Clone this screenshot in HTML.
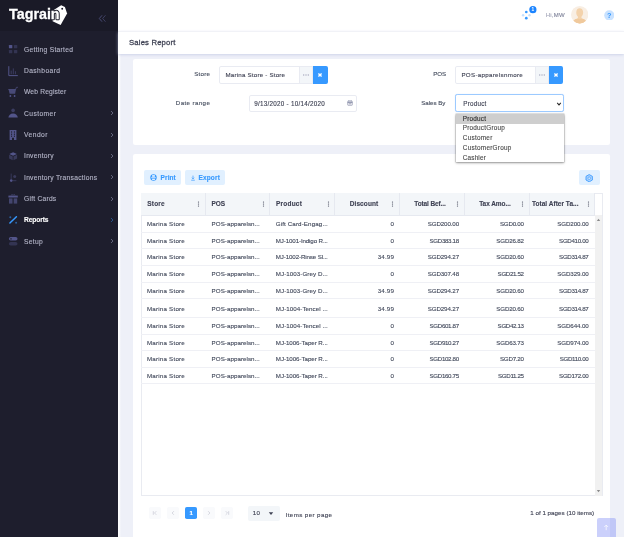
<!DOCTYPE html>
<html lang="en">
<head>
<meta charset="utf-8">
<title>Sales Report - Tagrain</title>
<style>
*{box-sizing:border-box;margin:0;padding:0}
html,body{width:624px;height:537px;overflow:hidden;background:#eef0f8;font-family:"Liberation Sans",Arial,sans-serif;}
body{position:relative;filter:contrast(1)}
.t{position:absolute;white-space:nowrap;line-height:1;display:block;-webkit-text-stroke:.12px}
.abs{position:absolute}
#aside{position:absolute;left:0;top:0;width:118px;height:537px;background:#1e1e2d}
#brand{position:absolute;left:0;top:0;width:118px;height:31px;background:#1a1a27}
#header{position:absolute;left:118px;top:0;width:506px;height:31px;background:#fff}
#subheader{position:absolute;left:118px;top:31px;width:506px;height:23.1px;background:#fff;border-top:1px solid #f1f2f7;box-shadow:0 1.2px 3px rgba(172,180,218,.62)}
.card{position:absolute;background:#fff;border-radius:2.2px}
.btnl{position:absolute;background:#e1f0ff;border-radius:1.9px}
.inp{position:absolute;background:#fff;border:1px solid #e9ebf2;border-radius:1.9px}
.hline{position:absolute;height:1px;background:#eff0f5}
.vline{position:absolute;width:1px;background:#e6e9f0}
</style>
</head>
<body>

<div id="aside">
<div id="brand">
<svg class="abs" style="left:0;top:0" width="118" height="31" viewBox="0 0 118 31">
<polygon points="53.0,10.6 61.2,5.2 64.9,6.9 67.1,13.6 60.6,25.0 52.6,21.2" fill="#fff"/>
<circle cx="62.2" cy="8.7" r="0.95" fill="#1a1a27"/>
<text x="9.1" y="19.4" font-family="Liberation Sans, Arial, sans-serif" font-weight="700" font-size="15.5" textLength="50.5" lengthAdjust="spacingAndGlyphs" fill="#1a1a27" stroke="#1a1a27" stroke-width="2.5" stroke-linejoin="round">Tagrain</text>
<text x="9.1" y="19.4" font-family="Liberation Sans, Arial, sans-serif" font-weight="700" font-size="15.5" textLength="50.5" lengthAdjust="spacingAndGlyphs" fill="#fff" stroke="#fff" stroke-width=".3">Tagrain</text>
<g fill="none" stroke="#494b74" stroke-width="1" stroke-linecap="round" stroke-linejoin="round">
<polyline points="101.8,15.6 99.3,18.5 101.8,21.4"/>
<polyline points="105.2,15.6 102.7,18.5 105.2,21.4" opacity=".75"/>
</g>
</svg>
</div>
<svg class="abs" style="left:7.3px;top:43.3px" width="12" height="12" viewBox="0 0 12 12"><rect x="1.9" y="1.9" width="3.4" height="3.4" rx=".6" fill="#53558a"/><rect x="6.9" y="1.9" width="3.4" height="3.4" rx=".6" fill="#53558a" opacity=".4"/><rect x="1.9" y="6.9" width="3.4" height="3.4" rx=".6" fill="#53558a" opacity=".4"/><rect x="6.9" y="6.9" width="3.4" height="3.4" rx=".6" fill="#53558a" opacity=".4"/></svg>
<span class="t" style="left:24px;top:49.75px;font-size:6.7px;color:#b4b5c8;letter-spacing:0.286px;font-weight:400;transform:translate(0,-50%);">Getting Started</span>
<svg class="abs" style="left:7.3px;top:64.6px" width="12" height="12" viewBox="0 0 12 12"><path d="M1.8 1.2 V10.6 H10.8" fill="none" stroke="#53558a" stroke-width="1"/><rect x="3.7" y="5.6" width="1" height="3.6" fill="#53558a" opacity=".55"/><rect x="5.8" y="3.4" width="1" height="5.8" fill="#53558a" opacity=".55"/><rect x="7.9" y="6.2" width="1" height="3" fill="#53558a" opacity=".55"/></svg>
<span class="t" style="left:24px;top:71.05px;font-size:6.7px;color:#b4b5c8;letter-spacing:0.41px;font-weight:400;transform:translate(0,-50%);">Dashboard</span>
<svg class="abs" style="left:7.3px;top:85.9px" width="12" height="12" viewBox="0 0 12 12"><path d="M1.2 3.6 H8.6 L9.4 1.3 H11 " fill="none" stroke="#53558a" stroke-width=".9" opacity=".7"/><path d="M1.6 3.2 H9 L8.1 7.8 H2.6 Z" fill="#53558a" opacity=".8"/><circle cx="3.4" cy="10" r=".9" fill="#53558a"/><circle cx="7.6" cy="10" r=".9" fill="#53558a"/></svg>
<span class="t" style="left:24px;top:92.35000000000001px;font-size:6.7px;color:#b4b5c8;letter-spacing:0.164px;font-weight:400;transform:translate(0,-50%);">Web Register</span>
<svg class="abs" style="left:7.3px;top:107.2px" width="12" height="12" viewBox="0 0 12 12"><circle cx="6.1" cy="3.4" r="1.8" fill="#53558a" opacity=".55"/><path d="M1.4 10.6 C1.6 8 3.4 6.4 6.1 6.4 C8.8 6.4 10.6 8 10.8 10.6 Z" fill="#53558a"/></svg>
<span class="t" style="left:24px;top:113.65px;font-size:6.7px;color:#b4b5c8;letter-spacing:0.429px;font-weight:400;transform:translate(0,-50%);">Customer</span>
<svg class="abs" style="left:108.5px;top:110.2px" width="6" height="6" viewBox="0 0 6 6"><polyline points="2,1 4,3 2,5" fill="none" stroke="#7e809a" stroke-width=".8" opacity=".9"/></svg>
<svg class="abs" style="left:7.3px;top:128.6px" width="12" height="12" viewBox="0 0 12 12"><path d="M2.6 1 H9.4 V11 H7 V8.8 H5 V11 H2.6 Z" fill="#53558a"/><rect x="4" y="2.4" width="1.1" height="1.2" fill="#1e1e2d"/><rect x="6.9" y="2.4" width="1.1" height="1.2" fill="#1e1e2d"/><rect x="4" y="4.6" width="1.1" height="1.2" fill="#1e1e2d"/><rect x="6.9" y="4.6" width="1.1" height="1.2" fill="#1e1e2d"/><rect x="4" y="6.6" width="1.1" height="1.2" fill="#1e1e2d"/><rect x="6.9" y="6.6" width="1.1" height="1.2" fill="#1e1e2d"/></svg>
<span class="t" style="left:24px;top:135.04999999999998px;font-size:6.7px;color:#b4b5c8;letter-spacing:0.46px;font-weight:400;transform:translate(0,-50%);">Vendor</span>
<svg class="abs" style="left:108.5px;top:131.6px" width="6" height="6" viewBox="0 0 6 6"><polyline points="2,1 4,3 2,5" fill="none" stroke="#7e809a" stroke-width=".8" opacity=".9"/></svg>
<svg class="abs" style="left:7.3px;top:149.9px" width="12" height="12" viewBox="0 0 12 12"><path d="M6.1 2.2 L9.9 4.0 L6.1 5.8 L2.3 4.0 Z" fill="#53558a"/><path d="M2.1 4.8 L5.7 6.5 V10.2 L2.1 8.4 Z" fill="#53558a" opacity=".5"/><path d="M10.1 4.8 L6.5 6.5 V10.2 L10.1 8.4 Z" fill="#53558a" opacity=".5"/></svg>
<span class="t" style="left:24px;top:156.35px;font-size:6.7px;color:#b4b5c8;letter-spacing:0.273px;font-weight:400;transform:translate(0,-50%);">Inventory</span>
<svg class="abs" style="left:108.5px;top:152.9px" width="6" height="6" viewBox="0 0 6 6"><polyline points="2,1 4,3 2,5" fill="none" stroke="#7e809a" stroke-width=".8" opacity=".9"/></svg>
<svg class="abs" style="left:7.3px;top:171.2px" width="12" height="12" viewBox="0 0 12 12"><path d="M4.2 2.6 V8.4 M5.2 9.7 H9.4" fill="none" stroke="#53558a" stroke-width=".8" opacity=".6"/><circle cx="4.2" cy="9.6" r="1.3" fill="#53558a"/><circle cx="7.7" cy="5.6" r="1.5" fill="#53558a" opacity=".5"/></svg>
<span class="t" style="left:24px;top:177.64999999999998px;font-size:6.7px;color:#b4b5c8;letter-spacing:0.272px;font-weight:400;transform:translate(0,-50%);">Inventory Transactions</span>
<svg class="abs" style="left:108.5px;top:174.2px" width="6" height="6" viewBox="0 0 6 6"><polyline points="2,1 4,3 2,5" fill="none" stroke="#7e809a" stroke-width=".8" opacity=".9"/></svg>
<svg class="abs" style="left:7.3px;top:192.6px" width="12" height="12" viewBox="0 0 12 12"><rect x="1.4" y="2.6" width="9.4" height="1.9" fill="#53558a"/><path d="M4.2 2.6 L5 1.2 L6.1 2.4 L7.2 1.2 L8 2.6" fill="none" stroke="#53558a" stroke-width=".7" opacity=".7"/><rect x="2" y="5.4" width="3.5" height="5.2" fill="#53558a" opacity=".7"/><rect x="6.7" y="5.4" width="3.5" height="5.2" fill="#53558a" opacity=".7"/></svg>
<span class="t" style="left:24px;top:199.04999999999998px;font-size:6.7px;color:#b4b5c8;letter-spacing:0.233px;font-weight:400;transform:translate(0,-50%);">Gift Cards</span>
<svg class="abs" style="left:108.5px;top:195.6px" width="6" height="6" viewBox="0 0 6 6"><polyline points="2,1 4,3 2,5" fill="none" stroke="#7e809a" stroke-width=".8" opacity=".9"/></svg>
<svg class="abs" style="left:7.3px;top:213.9px" width="12" height="12" viewBox="0 0 12 12"><path d="M2.9 9 L9.4 2.7" fill="none" stroke="#3699ff" stroke-width="1.5" stroke-linecap="round"/><circle cx="3.3" cy="3.2" r="1" fill="#3699ff" opacity=".55"/><circle cx="9.1" cy="8.8" r="1" fill="#3699ff" opacity=".55"/></svg>
<span class="t" style="left:24px;top:220.35px;font-size:6.7px;color:#ffffff;letter-spacing:-0.128px;font-weight:700;transform:translate(0,-50%);">Reports</span>
<svg class="abs" style="left:108.5px;top:216.9px" width="6" height="6" viewBox="0 0 6 6"><polyline points="2,1 4,3 2,5" fill="none" stroke="#3699ff" stroke-width=".8" opacity=".55"/></svg>
<svg class="abs" style="left:7.3px;top:235.2px" width="12" height="12" viewBox="0 0 12 12"><rect x="1.9" y="2.0" width="8.6" height="3.6" rx="1.8" fill="#53558a"/><circle cx="4" cy="3.8" r=".9" fill="#1e1e2d" opacity=".7"/><rect x="1.9" y="6.9" width="8.6" height="3.6" rx="1.8" fill="#53558a" opacity=".4"/></svg>
<span class="t" style="left:24px;top:241.64999999999998px;font-size:6.7px;color:#b4b5c8;letter-spacing:0.304px;font-weight:400;transform:translate(0,-50%);">Setup</span>
<svg class="abs" style="left:108.5px;top:238.2px" width="6" height="6" viewBox="0 0 6 6"><polyline points="2,1 4,3 2,5" fill="none" stroke="#7e809a" stroke-width=".8" opacity=".9"/></svg>
</div>
<div id="header">
<svg class="abs" style="left:400.5px;top:4px" width="24" height="20" viewBox="0 0 24 20">
<circle cx="7.3" cy="8.0" r="1.35" fill="#3699ff"/>
<circle cx="7.3" cy="14.2" r="1.35" fill="#3699ff"/>
<circle cx="4.1" cy="11.2" r="1.2" fill="#3699ff" opacity=".3"/>
<circle cx="10.5" cy="11.2" r="1.2" fill="#3699ff" opacity=".3"/>
<circle cx="13.9" cy="5.7" r="3.6" fill="#1b84ff"/>
<text x="13.9" y="7.4" font-family="Liberation Sans, Arial, sans-serif" font-size="4.8" font-weight="700" fill="#fff" text-anchor="middle">1</text>
</svg>
</div>
<span class="t" style="left:545.7px;top:15.3px;font-size:6.0px;color:#a3a5b8;letter-spacing:0.25px;font-weight:400;transform:translate(0,-50%);">Hi,</span>
<span class="t" style="left:553.8px;top:15.3px;font-size:6.0px;color:#7e8299;letter-spacing:0.3px;font-weight:400;transform:translate(0,-50%);">MW</span>
<svg class="abs" style="left:570.6px;top:6.4px" width="17.4" height="17.4" viewBox="0 0 34 34">
<defs><clipPath id="avc"><circle cx="17" cy="17" r="17"/></clipPath></defs>
<circle cx="17" cy="17" r="17" fill="#f8eee3"/>
<g clip-path="url(#avc)">
<path d="M3 36 C3 27 9 25.5 13.4 24.4 L13.6 21 C10.6 18.6 10 14.6 10.4 11 C10.8 6.6 13.6 4.4 17 4.4 C20.4 4.4 23.2 6.6 23.6 11 C24 14.6 23.4 18.6 20.4 21 L20.6 24.4 C25 25.5 31 27 31 36 Z" fill="#f3d2ab"/>
<path d="M3 36 C3 27 9 25.5 13.4 24.4 C15.6 26.2 18.4 26.2 20.6 24.4 C25 25.5 31 27 31 36 Z" fill="#f0c99c"/>
</g>
</svg>
<svg class="abs" style="left:603.6px;top:9.7px" width="10.6" height="10.6" viewBox="0 0 10.6 10.6">
<circle cx="5.3" cy="5.3" r="5.1" fill="#c9e2ff"/>
<text x="5.3" y="8" font-family="Liberation Sans, Arial, sans-serif" font-size="7.4" font-weight="700" fill="#3699ff" text-anchor="middle">?</text>
</svg>
<div class="abs" style="left:118px;top:54px;width:2.6px;height:483px;background:linear-gradient(90deg,#fdfdfe 35%,#eef0f8)"></div>
<div id="subheader"></div>
<span class="t" style="left:129px;top:43.2px;font-size:7.7px;color:#3f4254;letter-spacing:0.178px;font-weight:400;transform:translate(0,-50%);-webkit-text-stroke:.28px #3f4254;">Sales Report</span>
<div class="card" style="left:133.3px;top:59.2px;width:476.6px;height:85.6px"></div>
<span class="t" style="left:210.10px;top:74.4px;font-size:6.2px;color:#464e5f;letter-spacing:0.201px;font-weight:400;transform:translate(-100%,-50%);">Store</span>
<div class="inp" style="left:219.3px;top:66.2px;width:94.0px;height:17.6px;border-radius:1.9px 0 0 1.9px"></div><div class="abs" style="left:298.8px;top:66.2px;width:14.5px;height:17.6px;background:#f3f6f9;border:1px solid #e9ebf2"></div><div class="abs" style="left:313.3px;top:66.2px;width:14.3px;height:17.6px;background:#3699ff;border-radius:0 1.9px 1.9px 0"></div><svg class="abs" style="left:302.1px;top:73.0px" width="8" height="4" viewBox="0 0 8 4"><circle cx="1.7" cy="2" r=".7" fill="#a7a9bd"/><circle cx="4" cy="2" r=".7" fill="#a7a9bd"/><circle cx="6.3" cy="2" r=".7" fill="#a7a9bd"/></svg><svg class="abs" style="left:317.4px;top:72.0px" width="6" height="6" viewBox="0 0 6 6"><path d="M1.4 1.4 L4.6 4.6 M4.6 1.4 L1.4 4.6" stroke="#fff" stroke-width="1.35" fill="none"/></svg><span class="t" style="left:225.5px;top:75.0px;font-size:6.2px;color:#3f4254;letter-spacing:0.199px;font-weight:400;transform:translate(0,-50%);">Marina Store - Store</span>
<span class="t" style="left:445.96px;top:74.4px;font-size:6.2px;color:#464e5f;letter-spacing:-0.138px;font-weight:400;transform:translate(-100%,-50%);">POS</span>
<div class="inp" style="left:454.9px;top:66.2px;width:94.2px;height:17.6px;border-radius:1.9px 0 0 1.9px"></div><div class="abs" style="left:534.7px;top:66.2px;width:14.4px;height:17.6px;background:#f3f6f9;border:1px solid #e9ebf2"></div><div class="abs" style="left:549.1px;top:66.2px;width:14.4px;height:17.6px;background:#3699ff;border-radius:0 1.9px 1.9px 0"></div><svg class="abs" style="left:537.9px;top:73.0px" width="8" height="4" viewBox="0 0 8 4"><circle cx="1.7" cy="2" r=".7" fill="#a7a9bd"/><circle cx="4" cy="2" r=".7" fill="#a7a9bd"/><circle cx="6.3" cy="2" r=".7" fill="#a7a9bd"/></svg><svg class="abs" style="left:553.3px;top:72.0px" width="6" height="6" viewBox="0 0 6 6"><path d="M1.4 1.4 L4.6 4.6 M4.6 1.4 L1.4 4.6" stroke="#fff" stroke-width="1.35" fill="none"/></svg><span class="t" style="left:461.4px;top:75.0px;font-size:6.2px;color:#3f4254;letter-spacing:0.306px;font-weight:400;transform:translate(0,-50%);">POS-apparelsnmore</span>
<span class="t" style="left:210.29px;top:103.4px;font-size:6.2px;color:#464e5f;letter-spacing:0.386px;font-weight:400;transform:translate(-100%,-50%);">Date range</span>
<div class="inp" style="left:249.2px;top:95px;width:108.2px;height:16.6px"></div>
<span class="t" style="left:254.2px;top:103.9px;font-size:6.3px;color:#3f4254;letter-spacing:0.26px;font-weight:400;transform:translate(0,-50%);">9/13/2020 - 10/14/2020</span>
<svg class="abs" style="left:347.2px;top:100.4px" width="6" height="6" viewBox="0 0 6 6">
<rect x=".7" y="1.1" width="4.6" height="4.2" rx=".5" fill="none" stroke="#8f93ad" stroke-width=".7"/>
<path d="M.7 2.5 H5.3 M1.9 .3 V1.6 M4.1 .3 V1.6" stroke="#6c7293" stroke-width=".7" fill="none"/>
<rect x="1.7" y="3.3" width="2.6" height="1" fill="#6c7293" opacity=".7"/>
</svg>
<span class="t" style="left:445.24px;top:103.2px;font-size:6.2px;color:#464e5f;letter-spacing:-0.061px;font-weight:400;transform:translate(-100%,-50%);">Sales By</span>
<div class="inp" style="left:454.8px;top:94.3px;width:108.9px;height:17.7px;border:1px solid #9ccaff;border-radius:2.2px;box-shadow:0 0 .8px rgba(54,153,255,.35)"></div>
<span class="t" style="left:463.3px;top:104.0px;font-size:6.3px;color:#3f4254;letter-spacing:0.216px;font-weight:400;transform:translate(0,-50%);">Product</span>
<svg class="abs" style="left:555.6px;top:100.6px" width="6" height="6" viewBox="0 0 6 6"><polyline points="1.2,1.9 3,3.9 4.8,1.9" fill="none" stroke="#2b2b2b" stroke-width="1.05"/></svg>
<div class="card" style="left:133.3px;top:153.8px;width:476.6px;height:390px"></div>
<div class="btnl" style="left:143.9px;top:170.4px;width:37.1px;height:14.4px"></div>
<svg class="abs" style="left:149.8px;top:174.4px" width="7" height="7" viewBox="0 0 7 7">
<circle cx="3.5" cy="3.5" r="3.2" fill="#3699ff"/>
<rect x="2.1" y="1.1" width="2.8" height="1.7" fill="#e1f0ff"/>
<rect x="1.2" y="3.2" width="4.6" height="1" fill="#e1f0ff" opacity=".9"/>
<rect x="2.1" y="4.7" width="2.8" height="1.3" fill="#e1f0ff"/>
</svg>
<span class="t" style="left:160.6px;top:177.7px;font-size:6.5px;color:#3699ff;letter-spacing:0.097px;font-weight:700;transform:translate(0,-50%);">Print</span>
<div class="btnl" style="left:184.9px;top:170.4px;width:39.7px;height:14.4px"></div>
<svg class="abs" style="left:189.8px;top:174.6px" width="6" height="6" viewBox="0 0 6 6">
<path d="M3 .6 V3.8 M1.8 2.7 L3 3.9 L4.2 2.7 M1.2 5.2 H4.8" fill="none" stroke="#3699ff" stroke-width=".7"/>
</svg>
<span class="t" style="left:198.4px;top:177.7px;font-size:6.5px;color:#3699ff;letter-spacing:0.182px;font-weight:700;transform:translate(0,-50%);">Export</span>
<div class="btnl" style="left:579.3px;top:170.1px;width:20.3px;height:14.7px"></div>
<svg class="abs" style="left:585.2px;top:173.6px" width="8.4" height="8.4" viewBox="0 0 7.6 7.6">
<polygon points="3.8,.5 6.7,2.15 6.7,5.45 3.8,7.1 .9,5.45 .9,2.15" fill="#a9d1ff" stroke="#3699ff" stroke-width=".75" stroke-linejoin="round"/>
<circle cx="3.8" cy="3.8" r="1.15" fill="#e1f0ff" stroke="#3699ff" stroke-width=".6"/>
</svg>
<div class="abs" style="left:140.9px;top:192.9px;width:461.9px;height:303.3px;background:#fff;border:1px solid #e9ebf1"></div>
<div class="abs" style="left:141.4px;top:193.4px;width:453.3px;height:21.6px;background:#f3f6f9"></div>
<div class="hline" style="left:140.9px;top:214.5px;width:461.9px;background:#e6e9f0"></div>
<div class="vline" style="left:204.9px;top:193.4px;height:21.6px"></div>
<div class="vline" style="left:269.3px;top:193.4px;height:21.6px"></div>
<div class="vline" style="left:334.2px;top:193.4px;height:21.6px"></div>
<div class="vline" style="left:398.7px;top:193.4px;height:21.6px"></div>
<div class="vline" style="left:463.6px;top:193.4px;height:21.6px"></div>
<div class="vline" style="left:528.5px;top:193.4px;height:21.6px"></div>
<div class="vline" style="left:594.2px;top:193.4px;height:21.6px"></div>
<div class="abs" style="left:594.7px;top:215.0px;width:7.5px;height:280.6px;background:#f1f1f1"></div>
<svg class="abs" style="left:596.3000000000001px;top:218.2px" width="5" height="4" viewBox="0 0 5 4"><polygon points="2.5,.8 4.2,3 .8,3" fill="#8a8a8a"/></svg>
<svg class="abs" style="left:596.3000000000001px;top:488.8px" width="5" height="4" viewBox="0 0 5 4"><polygon points="2.5,3.2 4.2,1 .8,1" fill="#8a8a8a"/></svg>
<span class="t" style="left:147.29999999999998px;top:203.8px;font-size:6.5px;color:#3f4254;letter-spacing:0.195px;font-weight:700;transform:translate(0,-50%);">Store</span>
<svg class="abs" style="left:197.3px;top:201.2px" width="3" height="6" viewBox="0 0 3 6"><circle cx="1.5" cy="1.0" r=".62" fill="#3f4254"/><circle cx="1.5" cy="3" r=".62" fill="#3f4254"/><circle cx="1.5" cy="5.0" r=".62" fill="#3f4254"/></svg>
<span class="t" style="left:211.5px;top:203.8px;font-size:6.5px;color:#3f4254;letter-spacing:-0.116px;font-weight:700;transform:translate(0,-50%);">POS</span>
<svg class="abs" style="left:261.7px;top:201.2px" width="3" height="6" viewBox="0 0 3 6"><circle cx="1.5" cy="1.0" r=".62" fill="#3f4254"/><circle cx="1.5" cy="3" r=".62" fill="#3f4254"/><circle cx="1.5" cy="5.0" r=".62" fill="#3f4254"/></svg>
<span class="t" style="left:275.90000000000003px;top:203.8px;font-size:6.5px;color:#3f4254;letter-spacing:0.238px;font-weight:700;transform:translate(0,-50%);">Product</span>
<svg class="abs" style="left:326.6px;top:201.2px" width="3" height="6" viewBox="0 0 3 6"><circle cx="1.5" cy="1.0" r=".62" fill="#3f4254"/><circle cx="1.5" cy="3" r=".62" fill="#3f4254"/><circle cx="1.5" cy="5.0" r=".62" fill="#3f4254"/></svg>
<span class="t" style="left:378.30px;top:203.8px;font-size:6.5px;color:#3f4254;letter-spacing:0.098px;font-weight:700;transform:translate(-100%,-50%);">Discount</span>
<svg class="abs" style="left:391.1px;top:201.2px" width="3" height="6" viewBox="0 0 3 6"><circle cx="1.5" cy="1.0" r=".62" fill="#3f4254"/><circle cx="1.5" cy="3" r=".62" fill="#3f4254"/><circle cx="1.5" cy="5.0" r=".62" fill="#3f4254"/></svg>
<span class="t" style="left:445.69px;top:203.8px;font-size:6.5px;color:#3f4254;letter-spacing:-0.113px;font-weight:700;transform:translate(-100%,-50%);">Total Bef...</span>
<svg class="abs" style="left:456.0px;top:201.2px" width="3" height="6" viewBox="0 0 3 6"><circle cx="1.5" cy="1.0" r=".62" fill="#3f4254"/><circle cx="1.5" cy="3" r=".62" fill="#3f4254"/><circle cx="1.5" cy="5.0" r=".62" fill="#3f4254"/></svg>
<span class="t" style="left:510.63px;top:203.8px;font-size:6.5px;color:#3f4254;letter-spacing:-0.073px;font-weight:700;transform:translate(-100%,-50%);">Tax Amo...</span>
<svg class="abs" style="left:520.9px;top:201.2px" width="3" height="6" viewBox="0 0 3 6"><circle cx="1.5" cy="1.0" r=".62" fill="#3f4254"/><circle cx="1.5" cy="3" r=".62" fill="#3f4254"/><circle cx="1.5" cy="5.0" r=".62" fill="#3f4254"/></svg>
<span class="t" style="left:578.52px;top:203.8px;font-size:6.5px;color:#3f4254;letter-spacing:0.025px;font-weight:700;transform:translate(-100%,-50%);">Total After Ta...</span>
<svg class="abs" style="left:586.6px;top:201.2px" width="3" height="6" viewBox="0 0 3 6"><circle cx="1.5" cy="1.0" r=".62" fill="#3f4254"/><circle cx="1.5" cy="3" r=".62" fill="#3f4254"/><circle cx="1.5" cy="5.0" r=".62" fill="#3f4254"/></svg>
<span class="t" style="left:146.89999999999998px;top:224.0px;font-size:6.2px;color:#434a5c;letter-spacing:0.225px;font-weight:400;transform:translate(0,-50%);">Marina Store</span>
<span class="t" style="left:211.6px;top:224.0px;font-size:6.2px;color:#434a5c;letter-spacing:0.049px;font-weight:400;transform:translate(0,-50%);">POS-apparelsn...</span>
<span class="t" style="left:275.8px;top:224.0px;font-size:6.2px;color:#434a5c;letter-spacing:0.125px;font-weight:400;transform:translate(0,-50%);">Gift Card-Engag...</span>
<span class="t" style="left:393.90px;top:224.0px;font-size:6.2px;color:#434a5c;letter-spacing:0px;font-weight:400;transform:translate(-100%,-50%);">0</span>
<span class="t" style="left:458.98px;top:224.0px;font-size:6.2px;color:#434a5c;letter-spacing:-0.118px;font-weight:400;transform:translate(-100%,-50%);">SGD200.00</span>
<span class="t" style="left:523.76px;top:224.0px;font-size:6.2px;color:#434a5c;letter-spacing:-0.242px;font-weight:400;transform:translate(-100%,-50%);">SGD0.00</span>
<span class="t" style="left:588.58px;top:224.0px;font-size:6.2px;color:#434a5c;letter-spacing:-0.118px;font-weight:400;transform:translate(-100%,-50%);">SGD200.00</span>
<div class="hline" style="left:141.4px;top:231.6px;width:453.3px"></div>
<span class="t" style="left:146.89999999999998px;top:240.5px;font-size:6.2px;color:#434a5c;letter-spacing:0.225px;font-weight:400;transform:translate(0,-50%);">Marina Store</span>
<span class="t" style="left:211.6px;top:240.5px;font-size:6.2px;color:#434a5c;letter-spacing:0.049px;font-weight:400;transform:translate(0,-50%);">POS-apparelsn...</span>
<span class="t" style="left:275.8px;top:240.5px;font-size:6.2px;color:#434a5c;letter-spacing:-0.13px;font-weight:400;transform:translate(0,-50%);">MJ-1001-Indigo R...</span>
<span class="t" style="left:393.90px;top:240.5px;font-size:6.2px;color:#434a5c;letter-spacing:0px;font-weight:400;transform:translate(-100%,-50%);">0</span>
<span class="t" style="left:458.76px;top:240.5px;font-size:6.2px;color:#434a5c;letter-spacing:-0.343px;font-weight:400;transform:translate(-100%,-50%);">SGD383.18</span>
<span class="t" style="left:523.83px;top:240.5px;font-size:6.2px;color:#434a5c;letter-spacing:-0.172px;font-weight:400;transform:translate(-100%,-50%);">SGD26.82</span>
<span class="t" style="left:588.36px;top:240.5px;font-size:6.2px;color:#434a5c;letter-spacing:-0.343px;font-weight:400;transform:translate(-100%,-50%);">SGD410.00</span>
<div class="hline" style="left:141.4px;top:248.4px;width:453.3px"></div>
<span class="t" style="left:146.89999999999998px;top:257.3px;font-size:6.2px;color:#434a5c;letter-spacing:0.225px;font-weight:400;transform:translate(0,-50%);">Marina Store</span>
<span class="t" style="left:211.6px;top:257.3px;font-size:6.2px;color:#434a5c;letter-spacing:0.049px;font-weight:400;transform:translate(0,-50%);">POS-apparelsn...</span>
<span class="t" style="left:275.8px;top:257.3px;font-size:6.2px;color:#434a5c;letter-spacing:-0.13px;font-weight:400;transform:translate(0,-50%);">MJ-1002-Rinse Sl...</span>
<span class="t" style="left:394.08px;top:257.3px;font-size:6.2px;color:#434a5c;letter-spacing:0.176px;font-weight:400;transform:translate(-100%,-50%);">34.99</span>
<span class="t" style="left:458.98px;top:257.3px;font-size:6.2px;color:#434a5c;letter-spacing:-0.118px;font-weight:400;transform:translate(-100%,-50%);">SGD294.27</span>
<span class="t" style="left:523.83px;top:257.3px;font-size:6.2px;color:#434a5c;letter-spacing:-0.172px;font-weight:400;transform:translate(-100%,-50%);">SGD20.60</span>
<span class="t" style="left:588.36px;top:257.3px;font-size:6.2px;color:#434a5c;letter-spacing:-0.343px;font-weight:400;transform:translate(-100%,-50%);">SGD314.87</span>
<div class="hline" style="left:141.4px;top:264.9px;width:453.3px"></div>
<span class="t" style="left:146.89999999999998px;top:273.8px;font-size:6.2px;color:#434a5c;letter-spacing:0.225px;font-weight:400;transform:translate(0,-50%);">Marina Store</span>
<span class="t" style="left:211.6px;top:273.8px;font-size:6.2px;color:#434a5c;letter-spacing:0.049px;font-weight:400;transform:translate(0,-50%);">POS-apparelsn...</span>
<span class="t" style="left:275.8px;top:273.8px;font-size:6.2px;color:#434a5c;letter-spacing:0.069px;font-weight:400;transform:translate(0,-50%);">MJ-1003-Grey D...</span>
<span class="t" style="left:393.90px;top:273.8px;font-size:6.2px;color:#434a5c;letter-spacing:0px;font-weight:400;transform:translate(-100%,-50%);">0</span>
<span class="t" style="left:458.98px;top:273.8px;font-size:6.2px;color:#434a5c;letter-spacing:-0.118px;font-weight:400;transform:translate(-100%,-50%);">SGD307.48</span>
<span class="t" style="left:523.64px;top:273.8px;font-size:6.2px;color:#434a5c;letter-spacing:-0.36px;font-weight:400;transform:translate(-100%,-50%);">SGD21.52</span>
<span class="t" style="left:588.58px;top:273.8px;font-size:6.2px;color:#434a5c;letter-spacing:-0.118px;font-weight:400;transform:translate(-100%,-50%);">SGD329.00</span>
<div class="hline" style="left:141.4px;top:281.6px;width:453.3px"></div>
<span class="t" style="left:146.89999999999998px;top:290.5px;font-size:6.2px;color:#434a5c;letter-spacing:0.225px;font-weight:400;transform:translate(0,-50%);">Marina Store</span>
<span class="t" style="left:211.6px;top:290.5px;font-size:6.2px;color:#434a5c;letter-spacing:0.049px;font-weight:400;transform:translate(0,-50%);">POS-apparelsn...</span>
<span class="t" style="left:275.8px;top:290.5px;font-size:6.2px;color:#434a5c;letter-spacing:0.069px;font-weight:400;transform:translate(0,-50%);">MJ-1003-Grey D...</span>
<span class="t" style="left:394.08px;top:290.5px;font-size:6.2px;color:#434a5c;letter-spacing:0.176px;font-weight:400;transform:translate(-100%,-50%);">34.99</span>
<span class="t" style="left:458.98px;top:290.5px;font-size:6.2px;color:#434a5c;letter-spacing:-0.118px;font-weight:400;transform:translate(-100%,-50%);">SGD294.27</span>
<span class="t" style="left:523.83px;top:290.5px;font-size:6.2px;color:#434a5c;letter-spacing:-0.172px;font-weight:400;transform:translate(-100%,-50%);">SGD20.60</span>
<span class="t" style="left:588.36px;top:290.5px;font-size:6.2px;color:#434a5c;letter-spacing:-0.343px;font-weight:400;transform:translate(-100%,-50%);">SGD314.87</span>
<div class="hline" style="left:141.4px;top:298.4px;width:453.3px"></div>
<span class="t" style="left:146.89999999999998px;top:309.0px;font-size:6.2px;color:#434a5c;letter-spacing:0.225px;font-weight:400;transform:translate(0,-50%);">Marina Store</span>
<span class="t" style="left:211.6px;top:309.0px;font-size:6.2px;color:#434a5c;letter-spacing:0.049px;font-weight:400;transform:translate(0,-50%);">POS-apparelsn...</span>
<span class="t" style="left:275.8px;top:309.0px;font-size:6.2px;color:#434a5c;letter-spacing:0.064px;font-weight:400;transform:translate(0,-50%);">MJ-1004-Tencel ...</span>
<span class="t" style="left:394.08px;top:309.0px;font-size:6.2px;color:#434a5c;letter-spacing:0.176px;font-weight:400;transform:translate(-100%,-50%);">34.99</span>
<span class="t" style="left:458.98px;top:309.0px;font-size:6.2px;color:#434a5c;letter-spacing:-0.118px;font-weight:400;transform:translate(-100%,-50%);">SGD294.27</span>
<span class="t" style="left:523.83px;top:309.0px;font-size:6.2px;color:#434a5c;letter-spacing:-0.172px;font-weight:400;transform:translate(-100%,-50%);">SGD20.60</span>
<span class="t" style="left:588.36px;top:309.0px;font-size:6.2px;color:#434a5c;letter-spacing:-0.343px;font-weight:400;transform:translate(-100%,-50%);">SGD314.87</span>
<div class="hline" style="left:141.4px;top:316.9px;width:453.3px"></div>
<span class="t" style="left:146.89999999999998px;top:326.2px;font-size:6.2px;color:#434a5c;letter-spacing:0.225px;font-weight:400;transform:translate(0,-50%);">Marina Store</span>
<span class="t" style="left:211.6px;top:326.2px;font-size:6.2px;color:#434a5c;letter-spacing:0.049px;font-weight:400;transform:translate(0,-50%);">POS-apparelsn...</span>
<span class="t" style="left:275.8px;top:326.2px;font-size:6.2px;color:#434a5c;letter-spacing:0.064px;font-weight:400;transform:translate(0,-50%);">MJ-1004-Tencel ...</span>
<span class="t" style="left:393.90px;top:326.2px;font-size:6.2px;color:#434a5c;letter-spacing:0px;font-weight:400;transform:translate(-100%,-50%);">0</span>
<span class="t" style="left:458.76px;top:326.2px;font-size:6.2px;color:#434a5c;letter-spacing:-0.343px;font-weight:400;transform:translate(-100%,-50%);">SGD601.87</span>
<span class="t" style="left:523.64px;top:326.2px;font-size:6.2px;color:#434a5c;letter-spacing:-0.36px;font-weight:400;transform:translate(-100%,-50%);">SGD42.13</span>
<span class="t" style="left:588.58px;top:326.2px;font-size:6.2px;color:#434a5c;letter-spacing:-0.118px;font-weight:400;transform:translate(-100%,-50%);">SGD644.00</span>
<div class="hline" style="left:141.4px;top:333.7px;width:453.3px"></div>
<span class="t" style="left:146.89999999999998px;top:342.7px;font-size:6.2px;color:#434a5c;letter-spacing:0.225px;font-weight:400;transform:translate(0,-50%);">Marina Store</span>
<span class="t" style="left:211.6px;top:342.7px;font-size:6.2px;color:#434a5c;letter-spacing:0.049px;font-weight:400;transform:translate(0,-50%);">POS-apparelsn...</span>
<span class="t" style="left:275.8px;top:342.7px;font-size:6.2px;color:#434a5c;letter-spacing:-0.057px;font-weight:400;transform:translate(0,-50%);">MJ-1006-Taper R...</span>
<span class="t" style="left:393.90px;top:342.7px;font-size:6.2px;color:#434a5c;letter-spacing:0px;font-weight:400;transform:translate(-100%,-50%);">0</span>
<span class="t" style="left:458.76px;top:342.7px;font-size:6.2px;color:#434a5c;letter-spacing:-0.343px;font-weight:400;transform:translate(-100%,-50%);">SGD910.27</span>
<span class="t" style="left:523.83px;top:342.7px;font-size:6.2px;color:#434a5c;letter-spacing:-0.172px;font-weight:400;transform:translate(-100%,-50%);">SGD63.73</span>
<span class="t" style="left:588.58px;top:342.7px;font-size:6.2px;color:#434a5c;letter-spacing:-0.118px;font-weight:400;transform:translate(-100%,-50%);">SGD974.00</span>
<div class="hline" style="left:141.4px;top:350.2px;width:453.3px"></div>
<span class="t" style="left:146.89999999999998px;top:359.1px;font-size:6.2px;color:#434a5c;letter-spacing:0.225px;font-weight:400;transform:translate(0,-50%);">Marina Store</span>
<span class="t" style="left:211.6px;top:359.1px;font-size:6.2px;color:#434a5c;letter-spacing:0.049px;font-weight:400;transform:translate(0,-50%);">POS-apparelsn...</span>
<span class="t" style="left:275.8px;top:359.1px;font-size:6.2px;color:#434a5c;letter-spacing:-0.057px;font-weight:400;transform:translate(0,-50%);">MJ-1006-Taper R...</span>
<span class="t" style="left:393.90px;top:359.1px;font-size:6.2px;color:#434a5c;letter-spacing:0px;font-weight:400;transform:translate(-100%,-50%);">0</span>
<span class="t" style="left:458.76px;top:359.1px;font-size:6.2px;color:#434a5c;letter-spacing:-0.343px;font-weight:400;transform:translate(-100%,-50%);">SGD102.80</span>
<span class="t" style="left:523.76px;top:359.1px;font-size:6.2px;color:#434a5c;letter-spacing:-0.242px;font-weight:400;transform:translate(-100%,-50%);">SGD7.20</span>
<span class="t" style="left:588.34px;top:359.1px;font-size:6.2px;color:#434a5c;letter-spacing:-0.36px;font-weight:400;transform:translate(-100%,-50%);">SGD110.00</span>
<div class="hline" style="left:141.4px;top:366.6px;width:453.3px"></div>
<span class="t" style="left:146.89999999999998px;top:375.9px;font-size:6.2px;color:#434a5c;letter-spacing:0.225px;font-weight:400;transform:translate(0,-50%);">Marina Store</span>
<span class="t" style="left:211.6px;top:375.9px;font-size:6.2px;color:#434a5c;letter-spacing:0.049px;font-weight:400;transform:translate(0,-50%);">POS-apparelsn...</span>
<span class="t" style="left:275.8px;top:375.9px;font-size:6.2px;color:#434a5c;letter-spacing:-0.057px;font-weight:400;transform:translate(0,-50%);">MJ-1006-Taper R...</span>
<span class="t" style="left:393.90px;top:375.9px;font-size:6.2px;color:#434a5c;letter-spacing:0px;font-weight:400;transform:translate(-100%,-50%);">0</span>
<span class="t" style="left:458.76px;top:375.9px;font-size:6.2px;color:#434a5c;letter-spacing:-0.343px;font-weight:400;transform:translate(-100%,-50%);">SGD160.75</span>
<span class="t" style="left:523.64px;top:375.9px;font-size:6.2px;color:#434a5c;letter-spacing:-0.36px;font-weight:400;transform:translate(-100%,-50%);">SGD11.25</span>
<span class="t" style="left:588.36px;top:375.9px;font-size:6.2px;color:#434a5c;letter-spacing:-0.343px;font-weight:400;transform:translate(-100%,-50%);">SGD172.00</span>
<div class="hline" style="left:141.4px;top:383.4px;width:453.3px"></div>
<div class="abs" style="left:149.2px;top:507.3px;width:12px;height:11.4px;background:#f9fafc;border-radius:1.8px"></div>
<svg class="abs" style="left:151.2px;top:509.0px" width="8" height="8" viewBox="0 0 8 8"><g fill="none" stroke="#c9cbd6" stroke-width=".75"><path d="M2.3 2.2 V5.8"/><polyline points="5.3,2.2 3.5,4 5.3,5.8"/></g></svg>
<div class="abs" style="left:167.4px;top:507.3px;width:12px;height:11.4px;background:#f9fafc;border-radius:1.8px"></div>
<svg class="abs" style="left:169.4px;top:509.0px" width="8" height="8" viewBox="0 0 8 8"><g fill="none" stroke="#c9cbd6" stroke-width=".75"><polyline points="4.9,2.2 3.1,4 4.9,5.8"/></g></svg>
<div class="abs" style="left:203.2px;top:507.3px;width:12px;height:11.4px;background:#f9fafc;border-radius:1.8px"></div>
<svg class="abs" style="left:205.2px;top:509.0px" width="8" height="8" viewBox="0 0 8 8"><g fill="none" stroke="#c9cbd6" stroke-width=".75"><polyline points="3.1,2.2 4.9,4 3.1,5.8"/></g></svg>
<div class="abs" style="left:221.4px;top:507.3px;width:12px;height:11.4px;background:#f9fafc;border-radius:1.8px"></div>
<svg class="abs" style="left:223.4px;top:509.0px" width="8" height="8" viewBox="0 0 8 8"><g fill="none" stroke="#c9cbd6" stroke-width=".75"><path d="M5.7 2.2 V5.8"/><polyline points="2.7,2.2 4.5,4 2.7,5.8"/></g></svg>
<div class="abs" style="left:185.2px;top:507.3px;width:12px;height:11.4px;background:#3699ff;border-radius:1.8px"></div>
<span class="t" style="left:191.20px;top:513.0px;font-size:6.2px;color:#fff;letter-spacing:0px;font-weight:700;transform:translate(-50%,-50%);">1</span>
<div class="abs" style="left:248.2px;top:506px;width:32px;height:14.8px;background:#f3f6f9;border-radius:1.9px"></div>
<span class="t" style="left:252.8px;top:513.4px;font-size:6.2px;color:#3f4254;letter-spacing:0.2px;font-weight:400;transform:translate(0,-50%);">10</span>
<svg class="abs" style="left:268.2px;top:510.5px" width="6" height="5" viewBox="0 0 6 5"><polygon points="0.8,1.2 5.2,1.2 3,3.9" fill="#3f4254"/></svg>
<span class="t" style="left:285.6px;top:514.5px;font-size:6.2px;color:#3f4254;letter-spacing:0.394px;font-weight:400;transform:translate(0,-50%);">Items per page</span>
<span class="t" style="left:594.23px;top:513.2px;font-size:6.2px;color:#3f4254;letter-spacing:0.032px;font-weight:400;transform:translate(-100%,-50%);">1 of 1 pages (10 items)</span>
<div class="abs" style="left:455.5px;top:113.7px;width:108.6px;height:48.7px;background:#fff;box-shadow:0 0 0 .5px rgba(0,0,0,.2),0.3px 1px 2.4px rgba(0,0,0,.36)"></div>
<div class="abs" style="left:455.5px;top:114px;width:108.6px;height:9.6px;background:#cecece"></div>
<span class="t" style="left:462.8px;top:118.6px;font-size:6.4px;color:#2b2b2b;letter-spacing:0.196px;font-weight:400;transform:translate(0,-50%);">Product</span>
<span class="t" style="left:462.8px;top:128.3px;font-size:6.4px;color:#4a4a4a;letter-spacing:0.201px;font-weight:400;transform:translate(0,-50%);">ProductGroup</span>
<span class="t" style="left:462.8px;top:138.0px;font-size:6.4px;color:#4a4a4a;letter-spacing:0.257px;font-weight:400;transform:translate(0,-50%);">Customer</span>
<span class="t" style="left:462.8px;top:147.7px;font-size:6.4px;color:#4a4a4a;letter-spacing:0.261px;font-weight:400;transform:translate(0,-50%);">CustomerGroup</span>
<span class="t" style="left:462.8px;top:157.5px;font-size:6.4px;color:#4a4a4a;letter-spacing:0.162px;font-weight:400;transform:translate(0,-50%);">Cashier</span>
<div class="abs" style="left:597.2px;top:518px;width:18.6px;height:19px;background:rgba(118,132,245,.38);border-radius:2px 2px 0 0"></div>
<svg class="abs" style="left:603.3px;top:524px" width="6.4" height="7" viewBox="0 0 6.4 7"><path d="M3.2 6.2 V1.2 M1.3 3 L3.2 1.1 L5.1 3" fill="none" stroke="#fff" stroke-width=".7"/></svg>
</body></html>
